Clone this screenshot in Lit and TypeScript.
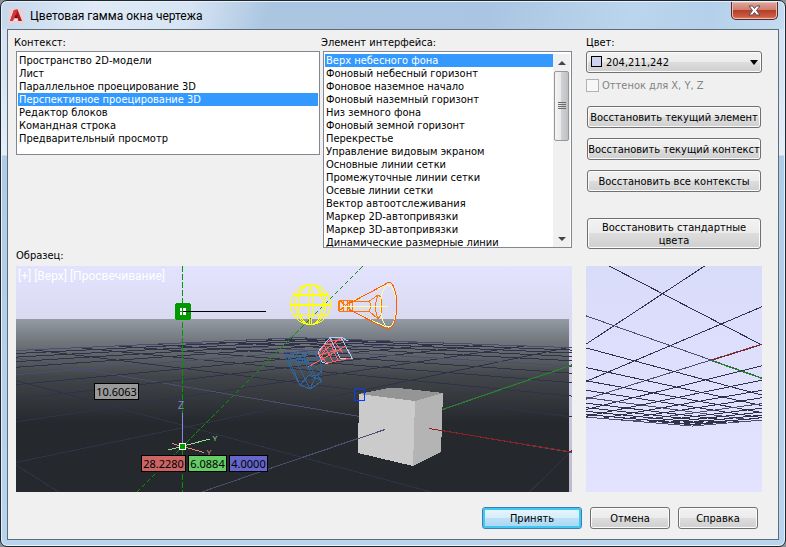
import { LitElement, html, svg, css } from "lit";
import { customElement, property, state } from "lit/decorators.js";

const CONTEXTS = [
  "Пространство 2D-модели",
  "Лист",
  "Параллельное проецирование 3D",
  "Перспективное проецирование 3D",
  "Редактор блоков",
  "Командная строка",
  "Предварительный просмотр",
];

const ELEMENTS = [
  "Верх небесного фона",
  "Фоновый небесный горизонт",
  "Фоновое наземное начало",
  "Фоновый наземный горизонт",
  "Низ земного фона",
  "Фоновый земной горизонт",
  "Перекрестье",
  "Управление видовым экраном",
  "Основные линии сетки",
  "Промежуточные линии сетки",
  "Осевые линии сетки",
  "Вектор автоотслеживания",
  "Маркер 2D-автопривязки",
  "Маркер 3D-автопривязки",
  "Динамические размерные линии",
];

/** Two-point perspective of the ground plane: origin, vanishing points and unit weights. */
interface Plane {
  ox: number;
  oy: number;
  horizon: number;
  ux: number;
  uw: number;
  vx: number;
  vw: number;
}

const GRID = 10;

function project(p: Plane, u: number, v: number) {
  const a = u * p.uw;
  const b = v * p.vw;
  const d = 1 + a + b;
  return [(p.ox + a * p.ux + b * p.vx) / d, (p.oy + (a + b) * p.horizon) / d];
}

function gridLine(p: Plane, fixed: "u" | "v", k: number, from: number, to: number) {
  const wf = fixed === "u" ? p.uw : p.vw;
  const wm = fixed === "u" ? p.vw : p.uw;
  const nearest = (0.06 - 1 - k * wf) / wm;
  const start = Math.max(from, nearest);
  if (start >= to) return null;
  const at = (t: number) => (fixed === "u" ? project(p, k, t) : project(p, t, k));
  return [...at(start), ...at(to)];
}

function gridLines(p: Plane) {
  const out = [];
  for (let k = -GRID; k <= GRID; k++) {
    for (const fixed of ["u", "v"] as const) {
      const l = gridLine(p, fixed, k, -GRID, GRID);
      if (!l) continue;
      out.push(svg`<line class=${k % 5 ? "minor" : "major"}
        x1=${l[0]} y1=${l[1]} x2=${l[2]} y2=${l[3]} />`);
    }
  }
  return out;
}

const MAIN: Plane = { ox: 401, oy: 423.5, horizon: 319, ux: -214, uw: 0.2155, vx: 705, vw: 0.245 };
const SIDE: Plane = { ox: 711, oy: 360, horizon: 449, ux: 427, uw: 0.149, vx: 963, vw: 0.139 };

@customElement("sample-view")
class SampleView extends LitElement {
  @property() kind = "main";

  static styles = css`
    :host { display: block; min-width: 0; }
    svg { display: block; width: 100%; height: 226px; }
    line, path, ellipse, circle, polygon, polyline, rect { shape-rendering: crispEdges; }
    .minor { stroke: #303347; }
    .major { stroke: #4b4e6c; }
    .wire { fill: none; stroke-width: 1; }
    .caption { font: 12px Roboto, sans-serif; fill: #fff; }
    .tag { font: 11px "Noto Sans", sans-serif; fill: #000; text-anchor: middle; }
    .axis { font: 10px "Liberation Sans", sans-serif; text-anchor: middle; }
    .small { font-size: 8px; }
  `;

  private tag(x: number, y: number, w: number, fill: string, text: string) {
    return svg`
      <rect x=${x + 0.5} y=${y + 0.5} width=${w} height="16" fill=${fill} stroke="#000" />
      <text class="tag" x=${x + w / 2 + 0.5} y=${y + 13}>${text}</text>`;
  }

  private main() {
    return html`<svg viewBox="16 266 556 226" preserveAspectRatio="xMidYMid slice">
      <defs>
        <linearGradient id="sky" x1="0" y1="0" x2="0" y2="1">
          <stop offset="0" stop-color="#e3e3ff" />
          <stop offset="0.24" stop-color="#d9d9f0" />
          <stop offset="1" stop-color="#bdb9cf" />
        </linearGradient>
        <linearGradient id="ground" x1="0" y1="0" x2="0" y2="1">
          <stop offset="0" stop-color="#959ba4" />
          <stop offset="0.12" stop-color="#73797f" />
          <stop offset="0.33" stop-color="#42464b" />
          <stop offset="0.6" stop-color="#25282c" />
          <stop offset="1" stop-color="#25282c" />
        </linearGradient>
      </defs>
      <rect x="16" y="266" width="556" height="226" fill="url(#sky)" />
      <rect x="16" y="319" width="553" height="173" fill="url(#ground)" />
      ${gridLines(MAIN)}
      <g class="wire" stroke="#1f8a1f"><path d="M401 424L572 365" /></g>

      <g class="wire" stroke="#009a00">
        <path d="M182.5 266V492" stroke-dasharray="6 2" />
        <path d="M363 266L137 492" stroke-dasharray="5 2" />
      </g>

      <polygon points="359,394 388,388 399,388 443,393 415,401" fill="#959595" />
      <polygon points="359,394 415,401 413,466 358,453" fill="#cbcbcb" />
      <polygon points="415,401 443,393 441,452 413,466" fill="#b4b4b4" />
      <path class="wire" d="M270 468.500L385 429.500" stroke="#4b4e6c" />
      <path class="wire" d="M429 428.500L572 452" stroke="#8f2020" />
      <rect class="wire" x="354.500" y="389.500" width="10" height="11" stroke="#0040ff" />

      <g class="wire" stroke="#ffff00">
        <circle cx="310.500" cy="304.500" r="20" />
        <ellipse cx="310.500" cy="304.500" rx="15" ry="20" />
        <ellipse cx="310.500" cy="304.500" rx="12" ry="20" />
        <ellipse cx="310.500" cy="304.500" rx="2" ry="20" />
        <path d="M294 294.500H328M290 304.500H331M294 315.500H328" />
        <path d="M294 295.500H328M290 305.500H331" />
      </g>

      <g class="wire" stroke="#ff7700">
        <path d="M339 300.500H352V311.500H339Z" />
        <path d="M343 300V312M347 300V312M349 300V312M338.500 301V311" />
        <path d="M339 300L352 311M339 311L352 300M351 301.500H369M351 311.500H369" />
        <path d="M369 301Q372 306 369 312M368 302L378 295L381 297M369 311L378 319L381 315" />
        <path d="M378 295Q373 306 378 319M381 296Q382 306 381 317" />
      </g>
      <g class="wire" stroke="#ffff99">
        <ellipse cx="388.500" cy="306" rx="8" ry="21" />
        <path d="M342 306.500H388M354 300L384 286M354 312L386 327" />
      </g>
      <g class="wire" stroke="#ff5a00">
        <path d="M350 303L384 285L389 282Q396 284 397 305Q396 328 388 329.500L350 310" />
      </g>

      <g class="wire" stroke="#b4ccf4">
        <path d="M330 337.500H341L352 358H340L330 337.500L318 352L322 362L328 364" />
        <path d="M341 337L348 341" />
      </g>
      <g class="wire" stroke="#ff6464">
        <path d="M330 340L342 340M330 344L324 345L319 354L327 363L341 360L351 358" />
        <path d="M330 343L338 360M324 345L333 362M336 344L343 353M341 338L322 352" />
        <path d="M346 346L308 367M318 355L338 350M325 350L320 360M330 340L323 347" />
      </g>
      <g class="wire" stroke="#2e659c">
        <path d="M285 357L298 351L303 355L313 352L320 360L322 372L317 375L322 381L310 389L300 385L294 375L285 357" />
        <path d="M285 357L296 361L303 355M286 353L300 385M296 361L310 389M303 355L316 377" />
        <path d="M290 353L305 362L320 358M288 362L300 358L313 364L321 372M296 352L300 364L309 350" />
        <path d="M300 385L309 375L322 381M305 362L312 375L317 375M310 389L315 378" />
      </g>

      <rect x="175" y="303" width="16" height="17" rx="3" fill="#009a00" />
      <path d="M180 308H186V315H180Z" fill="#fff" />
      <path class="wire" d="M182.500 308V315M180 311.500H186" stroke="#009a00" />
      <path class="wire" d="M183 311.500H266" stroke="#000" />

      <path class="wire" d="M182.500 413V445" stroke="#8888dd" />
      <path class="wire" d="M168 450L210 439" stroke="#90dd90" />
      <path class="wire" d="M172 443.500L204 452.500" stroke="#dd8880" />
      <text class="axis" x="181" y="409" fill="#8888dd">Z</text>
      <text class="axis small" x="215" y="441" fill="#90dd90">Y</text>
      <text class="axis small" x="209" y="455" fill="#dd8880">Y</text>
      <rect x="179.500" y="443.500" width="6" height="6" fill="#009a00" stroke="#fff" />

      ${this.tag(94, 383, 44, "#999999", "10.6063")}
      ${this.tag(141, 455, 44, "#cc6464", "28.2280")}
      ${this.tag(188, 455, 38, "#66cc66", "6.0884")}
      ${this.tag(229, 455, 38, "#6666cc", "4.0000")}
      <text class="caption" x="18" y="280">[+] [Верх] [Просвечивание]</text>
    </svg>`;
  }

  private side() {
    return html`<svg viewBox="586 266 176 226" preserveAspectRatio="xMidYMid slice">
      <defs>
        <linearGradient id="sky" x1="0" y1="0" x2="0" y2="1">
          <stop offset="0" stop-color="#d9dcf9" />
          <stop offset="1" stop-color="#e3e3ff" />
        </linearGradient>
      </defs>
      <rect x="586" y="266" width="176" height="226" fill="url(#sky)" />
      ${gridLines(SIDE)}
      <path class="wire" d="M711 360.500L762 344.500" stroke="#8f2020" />
      <path class="wire" d="M711 360.500L762 378.500" stroke="#1f8a1f" />
    </svg>`;
  }

  render() {
    return this.kind === "main" ? this.main() : this.side();
  }
}

@customElement("app-root")
class AppRoot extends LitElement {
  @state() private scrolled = 0;

  static styles = css`
    :host {
      display: block;
      font: 11px/13px "DejaVu Sans Condensed", "Noto Sans", sans-serif;
      color: #000;
      background: #8a8f94;
    }
    * { box-sizing: border-box; }
    button, select, input { font: inherit; color: inherit; margin: 0; }
    .window {
      min-height: 100vh;
      padding: 1px 6px 6px;
      border: 1px solid #20262e;
      border-radius: 7px;
      display: flex;
      flex-direction: column;
      background: linear-gradient(#d3e3f3 0 60px, #e4eef8 154px, #aecbe8 155px, #b9d4ee);
      box-shadow: inset 0 0 0 1px #e6f1fb;
    }
    .titlebar {
      height: 27px;
      display: flex;
      align-items: center;
      gap: 6px;
      margin: 0 -5px;
      padding-left: 6px;
      border-radius: 6px 6px 0 0;
      background: linear-gradient(100deg, #c4d8ec 0, #dfeaf6 12%, #d6e4f3 24%, #abc6e1 34%, #a9c5e1 62%, #bcd5ee 80%, #b4d0ea 90%, #c4dbf0);
    }
    .logo { width: 16px; height: 16px; }
    .title { flex: 1; margin: 0; font: 12px/16px Roboto, sans-serif; }
    .close {
      align-self: flex-start;
      width: 47px;
      height: 18px;
      margin-right: 6px;
      padding: 0;
      display: grid;
      place-items: center;
      border: 1px solid #5a2a28;
      border-top: 0;
      border-radius: 0 0 5px 5px;
      background: linear-gradient(#e0a69b 0, #cf7f70 45%, #b5402a 50%, #cc5a40 85%, #e08a6c);
      box-shadow: inset 0 0 0 1px #e9bdb4;
    }
    .client {
      flex: 1;
      padding: 6px 16px 9px 8px;
      border: 1px solid #5e6c78;
      background: #f0f0f0;
    }
    .columns { display: flex; gap: 14px; }
    .lists { flex: 1; min-width: 0; display: grid; grid-template-columns: 304fr 249fr; gap: 3px; align-items: start; }
    .side { flex: 0 0 176px; min-width: 0; display: flex; flex-direction: column; }
    .label { display: block; height: 15px; margin-left: -2px; }
    .side .label { margin-left: 0; }
    .box { display: flex; border: 1px solid #828790; background: #fff; padding: 2px 1px 0; }
    .list {
      flex: 1;
      min-width: 0;
      border: 0;
      border-radius: 0;
      padding: 0;
      outline: 0;
      background: #fff;
      overflow-x: hidden;
      overflow-y: auto;
      scrollbar-width: none;
    }
    .short { height: 100px; }
    .tall { height: 193px; }
    .list option { padding: 0 0 0 1px; height: 13px; min-height: 13px; line-height: 13px; border-radius: 0; }
    .list option:checked { background: linear-gradient(#3399ff, #3399ff); -webkit-text-fill-color: #fff; }
    .bar { width: 17px; display: flex; flex-direction: column; background: #f0f0f0; }
    .arrow { height: 17px; padding: 0; border: 0; background: none; display: grid; place-items: center; }
    .track { flex: 1; position: relative; }
    .thumb {
      position: absolute;
      left: 1px;
      right: 1px;
      height: 70px;
      display: grid;
      place-items: center;
      border: 1px solid #979797;
      border-radius: 2px;
      background: linear-gradient(90deg, #f4f4f4, #e9e9eb 45%, #d0d1d4 50%, #bfc0c4);
    }
    .button {
      height: 22px;
      padding: 0;
      border: 1px solid #707070;
      border-radius: 3px;
      background: linear-gradient(#f2f2f2, #ebebeb 49%, #dddddd 50%, #cfcfcf);
      box-shadow: inset 0 0 0 1px #fbfbfb;
      white-space: nowrap;
    }
    .default {
      border-color: #3c7fb1;
      background: linear-gradient(#eaf6fc, #d5edfa 49%, #bce1f6 50%, #a9d6f0);
      box-shadow: inset 0 0 0 2px #3fc8f4;
    }
    .side .button { margin: 0 1px; }
    .combo { position: relative; height: 22px; }
    .combo select {
      appearance: none;
      width: 100%;
      height: 22px;
      padding: 0 18px 0 19px;
      border: 1px solid #707070;
      border-radius: 3px;
      background: linear-gradient(#f2f2f2, #ebebeb 49%, #dddddd 50%, #cfcfcf);
      box-shadow: inset 0 0 0 1px #fbfbfb;
    }
    .swatch { position: absolute; left: 5px; top: 5px; width: 11px; height: 11px; border: 1px solid #000; background: rgb(204, 211, 242); pointer-events: none; }
    .drop { position: absolute; right: 4px; top: 9px; pointer-events: none; }
    .check { height: 15px; margin-top: 5px; display: flex; align-items: center; gap: 3px; color: #838383; }
    .check input { appearance: none; width: 13px; height: 13px; border: 1px solid #b1b1b1; background: #f7f7f7; }
    .resets { display: flex; flex-direction: column; gap: 10px; margin-top: 13px; }
    .side .tallbutton { height: 31px; margin-top: 16px; white-space: normal; }
    .sample { margin: 0; height: 17px; }
    .views { display: flex; gap: 14px; }
    .views sample-view { flex: 1; }
    .views sample-view.aside { flex: 0 0 176px; }
    .actions { display: flex; justify-content: flex-end; gap: 8px; margin: 15px 4px 0 0; }
    .actions .button { width: 80px; }
    .actions .default { width: 100px; }
  `;

  private onScroll(e: Event) {
    const el = e.target as HTMLElement;
    const room = el.scrollHeight - el.clientHeight;
    this.scrolled = room > 0 ? el.scrollTop / room : 0;
  }

  private nudge(dy: number) {
    this.renderRoot.querySelector("#element")?.scrollBy(0, dy);
  }

  render() {
    return html`
      <div class="window">
        <header class="titlebar">
          <svg class="logo" viewBox="0 0 16 16">
            <rect width="16" height="16" fill="#e3d3d8" />
            <path d="M6 2L9.500 1.500L14 13L10.500 13L9.500 10.500H6L4.500 13H2Z" fill="#b3151b" />
            <path d="M6 2L9.500 1.500L7.500 9L4.500 13H2Z" fill="#d2393c" />
            <path d="M8 6L9.500 10H6.500Z" fill="#7a0d12" />
            <path d="M6 10.500H10L8 13Z" fill="#f4eef0" />
          </svg>
          <h1 class="title">Цветовая гамма окна чертежа</h1>
          <button class="close" aria-label="Закрыть">
            <svg width="13" height="11" viewBox="0 0 13 11">
              <path d="M1 1H4.500L6.500 3.500L8.500 1H12L8.500 5.500L12 10H8.500L6.500 7.500L4.500 10H1L4.500 5.500Z"
                fill="#fff" stroke="#5b4a52" />
            </svg>
          </button>
        </header>
        <main class="client">
          <div class="columns">
            <div class="lists">
              <div>
                <label class="label" for="context">Контекст:</label>
                <div class="box">
                  <select class="list short" id="context" size="7">
                    ${CONTEXTS.map((c, i) => html`<option ?selected=${i === 3}>${c}</option>`)}
                  </select>
                </div>
              </div>
              <div>
                <label class="label" for="element">Элемент интерфейса:</label>
                <div class="box">
                  <select class="list tall" id="element" size="15" @scroll=${this.onScroll}>
                    ${ELEMENTS.map((c, i) => html`<option ?selected=${i === 0}>${c}</option>`)}
                  </select>
                  <div class="bar">
                    <button class="arrow" aria-label="Вверх" @click=${() => this.nudge(-13)}>
                      <svg width="8" height="4" viewBox="0 0 8 4"><path d="M0 4L4 0L8 4Z" fill="#444" /></svg>
                    </button>
                    <div class="track">
                      <div class="thumb" style="top:calc((100% - 70px) * ${this.scrolled})">
                        <svg width="8" height="8" viewBox="0 0 8 8">
                          <path d="M0 .5H8M0 2.500H8M0 4.500H8M0 6.500H8" stroke="#6b6b6b" />
                        </svg>
                      </div>
                    </div>
                    <button class="arrow" aria-label="Вниз" @click=${() => this.nudge(13)}>
                      <svg width="8" height="4" viewBox="0 0 8 4"><path d="M0 0L4 4L8 0Z" fill="#444" /></svg>
                    </button>
                  </div>
                </div>
              </div>
            </div>
            <div class="side">
              <label class="label" for="color">Цвет:</label>
              <div class="combo">
                <select id="color"><option>204,211,242</option></select>
                <span class="swatch"></span>
                <svg class="drop" width="8" height="5" viewBox="0 0 8 5"><path d="M0 0H8L4 5Z" /></svg>
              </div>
              <label class="check"><input type="checkbox" disabled />Оттенок для X, Y, Z</label>
              <div class="resets">
                <button class="button">Восстановить текущий элемент</button>
                <button class="button">Восстановить текущий контекст</button>
                <button class="button">Восстановить все контексты</button>
                <button class="button tallbutton">Восстановить стандартные цвета</button>
              </div>
            </div>
          </div>
          <p class="sample">Образец:</p>
          <div class="views">
            <sample-view kind="main"></sample-view>
            <sample-view class="aside" kind="side"></sample-view>
          </div>
          <div class="actions">
            <button class="button default">Принять</button>
            <button class="button">Отмена</button>
            <button class="button">Справка</button>
          </div>
        </main>
      </div>
    `;
  }
}
